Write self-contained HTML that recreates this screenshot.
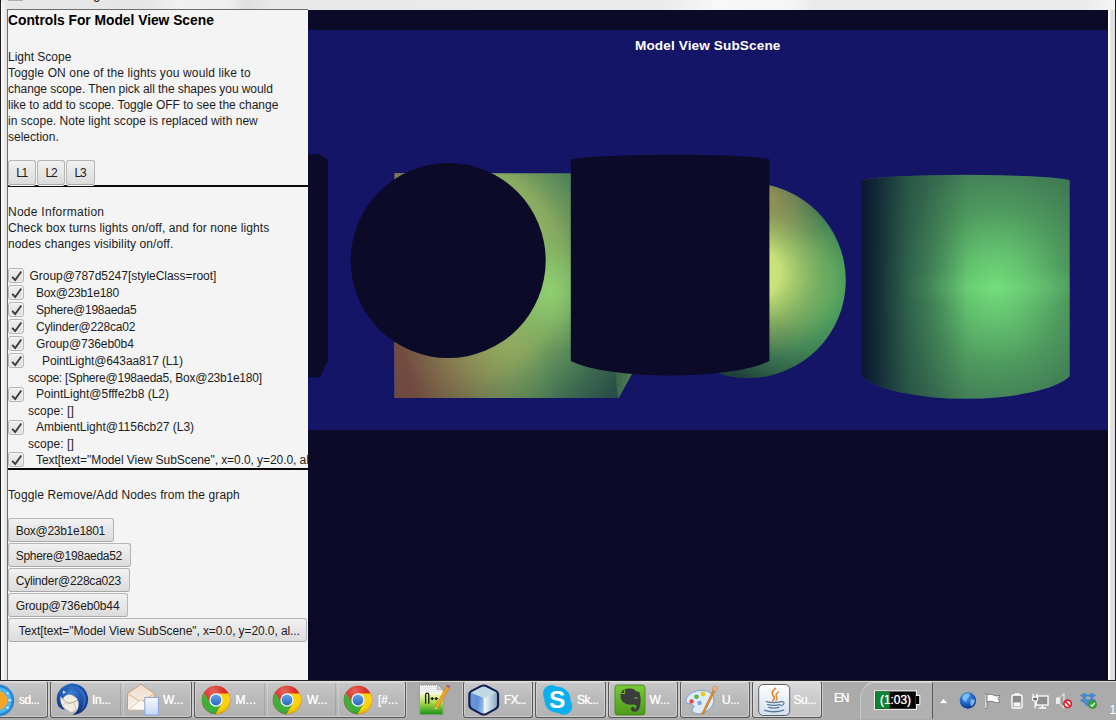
<!DOCTYPE html>
<html lang="en"><head><meta charset="utf-8"><title>Model View SubScene</title>
<style>
html,body{margin:0;padding:0;}
body{width:1116px;height:720px;overflow:hidden;position:relative;background:#ececec;font-family:"Liberation Sans",sans-serif;}
div,span{position:absolute;box-sizing:border-box;}
.t{white-space:nowrap;line-height:20px;height:20px;}
.clipL{width:272px;overflow:hidden;}
#frameL{left:0;top:0;width:1px;height:680px;background:#1c1c1c;}
#frameR{left:1115px;top:0;width:1px;height:680px;background:#1c1c1c;}
#frame{left:1px;top:0;width:1114px;height:680px;background:linear-gradient(100deg,#e7e7e7 0,#e6e6e6 12%,#f1f1f1 14.5%,#efefef 18.5%,#dfdfdf 20%,#e9e9e9 22%,#ebebeb 54%,#f8f8f8 58%,#f6f6f6 64%,#eaeaea 66%,#ebebeb 88%,#f7f7f7 90.5%,#f3f3f3 93%,#ececec 94.5%,#eeeeee);}
#frameRi{left:1108px;top:10px;width:7px;height:670px;background:linear-gradient(90deg,#fdfdfd 0 1.5px,#e2e2e2 2px,#dedede);}
#frameLi{left:1px;top:2px;width:6px;height:678px;background:linear-gradient(90deg,#fbfbfb,#f0f0f0 40%,#e3e3e3);}
#tl{left:8px;top:0;width:15px;height:1px;background:#adadad;}
#client{left:7px;top:9px;width:301px;height:672px;border-left:1px solid #6e6e6e;border-top:1px solid #6e6e6e;}
#panel{left:8px;top:10px;width:300px;height:670px;background:#f4f4f4;}
#scene{left:308px;top:10px;width:800px;height:670px;background:#0b0a28;overflow:hidden;}
#sub{left:0;top:20px;width:800px;height:400px;background:#151567;overflow:hidden;}
.hr{left:8px;width:300px;height:2px;background:#0a0a0a;}
.btn{height:24px;border:1px solid #b5b5b5;border-bottom-color:#a8a8a8;border-radius:3px;background:linear-gradient(#f1f1f1,#dcdcdc);box-shadow:0 1px 0 #fafafa;}
.cb{left:8px;width:16px;height:15px;border:1px solid #b4b4b4;border-radius:3px;background:linear-gradient(#efefef,#dedede);box-shadow:inset 0 0 0 1px rgba(255,255,255,.5);}
.cb svg{position:absolute;left:1.5px;top:0.5px;}
#taskbar{left:0;top:680px;width:1116px;height:40px;background:#ababab;border-top:1px solid #222;box-shadow:inset 0 1px 0 #dcdcdc;}
.tb{top:0px;height:37px;border:1px solid #585858;border-top-color:#dedede;border-radius:3px;background:linear-gradient(#c8c8c8,#b9b9b9 50%,#b3b3b3);box-shadow:inset 0 0 0 1px rgba(255,255,255,.3),1px 0 0 rgba(225,225,225,.6),-1px 0 0 rgba(225,225,225,.6);}
.tb.act{background:linear-gradient(#d9d9d9,#cbcbcb 50%,#c4c4c4);}
.sep{position:absolute;top:1px;width:2px;height:33px;border-left:1px solid rgba(120,120,120,.3);border-right:1px solid rgba(230,230,230,.4);}
#battab{left:860px;top:1px;width:73px;height:37px;background:#b1b1b1;border-top:1px solid #d4d4d4;border-left:1px solid #c8c8c8;border-right:1px solid #5a5a5a;border-top-left-radius:14px 18px;}
.w{text-shadow:0 0 .7px rgba(255,255,255,.85);}

</style></head><body>
<div id="frame"></div><div id="frameL"></div><div id="frameR"></div>
<div id="client"></div><div id="frameRi"></div><div id="frameLi"></div><div id="tl"></div>
<div id="panel"></div>
<div id="scene"><div id="sub"><svg id="scenesvg" width="800" height="400" viewBox="308 30 800 400" style="position:absolute;left:0;top:0">
<defs>
<radialGradient id="gBoxA" gradientUnits="userSpaceOnUse" cx="455" cy="270" r="230">
<stop offset="0.40" stop-color="#90b264"/><stop offset="0.47" stop-color="#86a860"/><stop offset="0.54" stop-color="#6c965c"/><stop offset="0.62" stop-color="#558558"/><stop offset="0.74" stop-color="#3c6850"/><stop offset="0.86" stop-color="#2c5048"/><stop offset="1" stop-color="#223c40"/></radialGradient>
<radialGradient id="gBoxH" gradientUnits="userSpaceOnUse" cx="550" cy="290" r="52" gradientTransform="translate(550 290) scale(1 1.25) translate(-550 -290)">
<stop offset="0" stop-color="#8fd070" stop-opacity="1"/><stop offset="0.4" stop-color="#86c46c" stop-opacity=".7"/><stop offset="1" stop-color="#70a860" stop-opacity="0"/></radialGradient>
<linearGradient id="gBoxB" gradientUnits="userSpaceOnUse" x1="395" y1="330" x2="525" y2="290">
<stop offset="0" stop-color="#70463f" stop-opacity=".95"/><stop offset="0.35" stop-color="#805a44" stop-opacity=".6"/><stop offset="0.7" stop-color="#90804c" stop-opacity=".25"/><stop offset="1" stop-color="#a0a050" stop-opacity="0"/></linearGradient>
<radialGradient id="gSphA" gradientUnits="userSpaceOnUse" cx="800" cy="284" r="110">
<stop offset="0" stop-color="#5cbc68"/><stop offset="0.3" stop-color="#56ac62"/><stop offset="0.6" stop-color="#428456"/><stop offset="0.85" stop-color="#2e5c48"/><stop offset="1" stop-color="#20403c"/></radialGradient>
<radialGradient id="gSphB" gradientUnits="userSpaceOnUse" cx="756" cy="273" r="88">
<stop offset="0" stop-color="#d6e87e" stop-opacity="1"/><stop offset="0.28" stop-color="#cee27a" stop-opacity=".95"/><stop offset="0.5" stop-color="#b8c86a" stop-opacity=".66"/><stop offset="0.75" stop-color="#a8a05a" stop-opacity=".32"/><stop offset="1" stop-color="#a08850" stop-opacity="0"/></radialGradient>
<radialGradient id="gSphC" gradientUnits="userSpaceOnUse" cx="768" cy="196" r="62">
<stop offset="0" stop-color="#a89c58" stop-opacity=".85"/><stop offset="0.5" stop-color="#98985a" stop-opacity=".5"/><stop offset="1" stop-color="#80905a" stop-opacity="0"/></radialGradient>
<radialGradient id="gCyl" gradientUnits="userSpaceOnUse" cx="996" cy="287" r="150" gradientTransform="translate(996 287) scale(1 1.1) translate(-996 -287)">
<stop offset="0" stop-color="#72de7a"/><stop offset="0.22" stop-color="#62c06e"/><stop offset="0.48" stop-color="#4e985e"/><stop offset="0.75" stop-color="#407c55"/><stop offset="1" stop-color="#356a4e"/></radialGradient>
<radialGradient id="gCylH" gradientUnits="userSpaceOnUse" cx="996" cy="287" r="105" gradientTransform="translate(996 287) scale(1 .22) translate(-996 -287)">
<stop offset="0" stop-color="#74e07c" stop-opacity=".55"/><stop offset="0.5" stop-color="#6cd076" stop-opacity=".3"/><stop offset="1" stop-color="#60c070" stop-opacity="0"/></radialGradient>
<linearGradient id="gCylL" gradientUnits="userSpaceOnUse" x1="862" y1="0" x2="968" y2="0">
<stop offset="0" stop-color="#0b1830" stop-opacity="1"/><stop offset="0.12" stop-color="#0e2034" stop-opacity=".92"/><stop offset="0.45" stop-color="#183a3c" stop-opacity=".5"/><stop offset="1" stop-color="#204840" stop-opacity="0"/></linearGradient>
<clipPath id="cBox"><path d="M394.6 173.3 H631.8 V374.2 L618.8 397.9 H394.6 Z"/></clipPath>
<linearGradient id="gWedge" gradientUnits="userSpaceOnUse" x1="616" y1="0" x2="631" y2="0"><stop offset="0" stop-color="#3c664b"/><stop offset="1" stop-color="#4f7e53"/></linearGradient>
<clipPath id="cSph"><circle cx="748.3" cy="280.5" r="97.5"/></clipPath>
</defs>
<g clip-path="url(#cBox)" style="isolation:isolate">
<rect x="394" y="173" width="250" height="226" fill="url(#gBoxA)"/>
<rect x="394" y="173" width="250" height="226" fill="url(#gBoxH)"/>
<rect x="394" y="173" width="250" height="226" fill="url(#gBoxB)"/>
<path d="M615.5 372 H632 V374.2 L618.8 397.9 H617.6 Z" fill="url(#gWedge)"/>
</g>
<circle cx="448.2" cy="260.5" r="97.5" fill="#0b0a28"/>
<g clip-path="url(#cSph)" style="isolation:isolate">
<rect x="650" y="180" width="200" height="200" fill="url(#gSphA)"/>
<rect x="650" y="180" width="200" height="200" fill="url(#gSphC)"/>
<rect x="650" y="180" width="200" height="200" fill="url(#gSphB)"/>
</g>
<path d="M570.8 159.6 A 102 5.9 0 0 1 769.4 159 V361 A 108 24 0 0 1 570.8 361 Z" fill="#0b0a28"/>
<path d="M862 180.2 A 107 7.1 0 0 1 1069.7 180.2 V376.5 A 109 32 0 0 1 862 376.5 Z" fill="url(#gCyl)"/>
<path d="M862 180.2 A 107 7.1 0 0 1 1069.7 180.2 V376.5 A 109 32 0 0 1 862 376.5 Z" fill="url(#gCylH)"/>
<path d="M862 180.2 A 107 7.1 0 0 1 1069.7 180.2 V376.5 A 109 32 0 0 1 862 376.5 Z" fill="url(#gCylL)"/>
<path d="M308 154.2 H319.2 L328 159.8 V360.5 L320 377.3 H308 Z" fill="#0b0a28"/>
</svg></div></div>
<div class="hr" style="top:185px"></div>
<div class="hr" style="top:468px"></div>
<div class="btn" style="left:8px;top:160px;width:28px;height:25px"></div>
<div class="btn" style="left:37px;top:160px;width:28px;height:25px"></div>
<div class="btn" style="left:66px;top:160px;width:29px;height:25px"></div>
<div class="btn" style="left:8px;top:518px;width:106px"></div>
<div class="btn" style="left:8px;top:543px;width:123px"></div>
<div class="btn" style="left:8px;top:568px;width:122px"></div>
<div class="btn" style="left:8px;top:593px;width:120px"></div>
<div class="btn" style="left:8px;top:618px;width:299px"></div>
<div class="cb" style="top:268px"><svg width="13" height="13" viewBox="0 0 13 13"><path d="M1.2 6.8 L4.2 10.1 L10.3 1.5" fill="none" stroke="#383838" stroke-width="1.8" stroke-linejoin="miter"/></svg></div>
<div class="cb" style="top:285px"><svg width="13" height="13" viewBox="0 0 13 13"><path d="M1.2 6.8 L4.2 10.1 L10.3 1.5" fill="none" stroke="#383838" stroke-width="1.8" stroke-linejoin="miter"/></svg></div>
<div class="cb" style="top:302px"><svg width="13" height="13" viewBox="0 0 13 13"><path d="M1.2 6.8 L4.2 10.1 L10.3 1.5" fill="none" stroke="#383838" stroke-width="1.8" stroke-linejoin="miter"/></svg></div>
<div class="cb" style="top:319px"><svg width="13" height="13" viewBox="0 0 13 13"><path d="M1.2 6.8 L4.2 10.1 L10.3 1.5" fill="none" stroke="#383838" stroke-width="1.8" stroke-linejoin="miter"/></svg></div>
<div class="cb" style="top:336px"><svg width="13" height="13" viewBox="0 0 13 13"><path d="M1.2 6.8 L4.2 10.1 L10.3 1.5" fill="none" stroke="#383838" stroke-width="1.8" stroke-linejoin="miter"/></svg></div>
<div class="cb" style="top:353px"><svg width="13" height="13" viewBox="0 0 13 13"><path d="M1.2 6.8 L4.2 10.1 L10.3 1.5" fill="none" stroke="#383838" stroke-width="1.8" stroke-linejoin="miter"/></svg></div>
<div class="cb" style="top:387px"><svg width="13" height="13" viewBox="0 0 13 13"><path d="M1.2 6.8 L4.2 10.1 L10.3 1.5" fill="none" stroke="#383838" stroke-width="1.8" stroke-linejoin="miter"/></svg></div>
<div class="cb" style="top:420px"><svg width="13" height="13" viewBox="0 0 13 13"><path d="M1.2 6.8 L4.2 10.1 L10.3 1.5" fill="none" stroke="#383838" stroke-width="1.8" stroke-linejoin="miter"/></svg></div>
<div class="cb" style="top:452px"><svg width="13" height="13" viewBox="0 0 13 13"><path d="M1.2 6.8 L4.2 10.1 L10.3 1.5" fill="none" stroke="#383838" stroke-width="1.8" stroke-linejoin="miter"/></svg></div>
<div id="taskbar">
<div class="tb" style="left:-6px;width:54px"></div>
<div class="tb" style="left:50px;width:142px"><i class="sep" style="left:69px"></i></div>
<div class="tb" style="left:194px;width:212px"><i class="sep" style="left:69px"></i><i class="sep" style="left:140px"></i></div>
<div class="tb" style="left:463px;width:70px"></div>
<div class="tb" style="left:535px;width:71px"></div>
<div class="tb" style="left:608px;width:70px"></div>
<div class="tb" style="left:680px;width:70px"></div>
<div class="tb act" style="left:752px;width:70px"></div>
<div id="battab"></div>
<svg id="tbicons" width="1116" height="40" viewBox="0 680 1116 40" style="position:absolute;left:0;top:-1px">
<defs>
<linearGradient id="gSun" x1="0" y1="0" x2="0" y2="1"><stop offset="0" stop-color="#49b4f0"/><stop offset="1" stop-color="#1c78d0"/></linearGradient>
<radialGradient id="gTb" cx="0.45" cy="0.3" r="0.75"><stop offset="0" stop-color="#3c7fd4"/><stop offset="0.5" stop-color="#1c52ac"/><stop offset="1" stop-color="#0c2a6e"/></radialGradient>
<linearGradient id="gEnv" x1="0" y1="0" x2="0" y2="1"><stop offset="0" stop-color="#eedccb"/><stop offset="1" stop-color="#fbf3ea"/></linearGradient>
<linearGradient id="gDoc" x1="0" y1="0" x2="0" y2="1"><stop offset="0" stop-color="#f6f9ff"/><stop offset="1" stop-color="#c4d8f6"/></linearGradient>
<linearGradient id="gNpp" x1="0" y1="0" x2="0" y2="1"><stop offset="0" stop-color="#ffffff"/><stop offset="0.2" stop-color="#e4f29c"/><stop offset="0.5" stop-color="#a6da48"/><stop offset="1" stop-color="#189016"/></linearGradient>
<linearGradient id="gEver" x1="0" y1="0" x2="0" y2="1"><stop offset="0" stop-color="#7cc83a"/><stop offset="1" stop-color="#4c9c1c"/></linearGradient>
<linearGradient id="gJava" x1="0" y1="0" x2="0" y2="1"><stop offset="0" stop-color="#ffffff"/><stop offset="1" stop-color="#d4e0ee"/></linearGradient>
<radialGradient id="gGlobe" cx="0.4" cy="0.3" r="0.75"><stop offset="0" stop-color="#5aa4ee"/><stop offset="0.6" stop-color="#1c5cc0"/><stop offset="1" stop-color="#0c2c78"/></radialGradient>
<linearGradient id="gCubeL" x1="0" y1="0" x2="1" y2="0.3"><stop offset="0" stop-color="#6c9ade"/><stop offset="0.6" stop-color="#5f8ed4"/><stop offset="1" stop-color="#8fb4e8"/></linearGradient>
<linearGradient id="gCubeR" x1="0" y1="0" x2="1" y2="0"><stop offset="0" stop-color="#f4fafc"/><stop offset="0.45" stop-color="#c8dae8"/><stop offset="1" stop-color="#8fa8c4"/></linearGradient>
<radialGradient id="gChG" gradientUnits="userSpaceOnUse" cx="-3" cy="-9" r="26"><stop offset="0" stop-color="#ffffff" stop-opacity=".28"/><stop offset="0.45" stop-color="#ffffff" stop-opacity="0"/><stop offset="0.75" stop-color="#000000" stop-opacity="0"/><stop offset="1" stop-color="#000000" stop-opacity=".22"/></radialGradient>
<linearGradient id="gChB" x1="0" y1="0" x2="0" y2="1"><stop offset="0" stop-color="#62a4e6"/><stop offset="1" stop-color="#2a68c0"/></linearGradient>
<g id="chrome">
<circle cx="0" cy="0" r="14.3" fill="#d92a20"/>
<path d="M-11.95 -7.6 A14.3 14.3 0 0 0 -0.55 14.25 L5.7 3.3 L-5.7 3.3 Z" fill="#3fae3a"/>
<path d="M-0.55 14.25 A14.3 14.3 0 0 0 12.7 -6.6 L0 -6.6 L5.7 3.3 Z" fill="#fbd00c"/>
<circle cx="0" cy="0" r="14.3" fill="url(#gChG)"/>
<circle cx="0" cy="0" r="6.7" fill="#f2f6fb"/>
<circle cx="0" cy="0" r="5.4" fill="url(#gChB)"/>
</g>
</defs>
<!-- sun/compass icon (cut off) -->
<circle cx="-1.7" cy="700.4" r="15.9" fill="#2a86d4"/>
<circle cx="-1.7" cy="700.4" r="13.2" fill="#4fb6ee"/>
<circle cx="-1.7" cy="700.4" r="9.2" fill="#f6a526"/>
<path d="M12 700.2 L8.6 698.8 V701.6 Z M8.4 691.4 L6.2 693.6 L8.6 694.6Z M8.4 709.4 L6.2 707.2 L8.6 706.2Z" fill="#e8f6ff"/>
<!-- thunderbird -->
<path d="M60.6 696.5 L69 693.6 L79.6 700 L78.6 710.2 L71 712.2 L61 705.8 Z" fill="#f1ece1"/>
<path d="M61 697.4 L66.4 702.6 Q70 704.2 73.6 702 L79 699.8" fill="none" stroke="#a39784" stroke-width=".9"/>
<path d="M73.6 702 L76.6 710.4" fill="none" stroke="#c4baa8" stroke-width=".8"/>
<path d="M66.4 702.8 L61.4 705.8" fill="none" stroke="#cfc6b4" stroke-width=".7"/>
<path d="M71 712.2 L78.6 710.2 L76 708.4 Z" fill="#d8d0c0"/>
<path d="M58.4 706.4 A15.7 15.7 0 1 1 72.6 715 Q76.6 712.4 77.6 709.4 Q79.6 704 77.6 699.6 Q74 694.4 68.6 694.6 Q65 695.4 62.8 698.4 L60.4 696.2 Q59.8 701 61.6 704.4 Q63 707.6 65 709.8 Q61 709 58.4 706.4 Z" fill="url(#gTb)"/>
<path d="M62.8 690.4 Q66.4 686.4 70.4 688.6 Q67.4 690.4 66.4 693.4 Q64.4 695.4 62.8 698.4 L61.2 696 Q61.2 692.8 62.8 690.4 Z" fill="#2a62ba"/>
<path d="M63.2 690.4 L66 692.4 L62.8 693.8 Z" fill="#dfeaf8"/>
<path d="M74 686 Q83 688 86 697 Q87.6 706 80 712.4 Q84 706 83 699 Q81.6 690.4 74 686 Z" fill="#4a8fe2" opacity=".4"/>
<!-- envelope + doc -->
<path d="M127.5 693.5 L141 684.2 L154.5 693.5 V710 H127.5 Z" fill="url(#gEnv)" stroke="#c59e80" stroke-width="1"/>
<path d="M127.5 693.5 L141 702 L154.5 693.5" fill="none" stroke="#d2b49a" stroke-width="1"/>
<path d="M128 710 L141 699.6 L154 710 Z" fill="#fdf8f2" stroke="#d8bea6" stroke-width=".8"/>
<rect x="144.8" y="697.4" width="13.6" height="17.6" fill="url(#gDoc)" stroke="#88a6dc" stroke-width="1"/>
<!-- chromes -->
<use href="#chrome" x="216" y="700"/>
<use href="#chrome" x="287" y="700"/>
<use href="#chrome" x="358" y="700"/>
<!-- notepad++ -->
<path d="M419.6 684.6 H437.4 L443.2 689.4 V714.8 H419.6 Z" fill="#ffffff" stroke="#8a8a8a" stroke-width=".8"/>
<rect x="420.1" y="691.6" width="22.7" height="22.8" fill="url(#gNpp)"/>
<path d="M421 685.6 H437" stroke="#9a9a9a" stroke-width=".9" stroke-dasharray="1 1"/>
<path d="M421 687.8 H437 M421 689.6 H441.6 M421 691.4 H441.6" stroke="#c8ccd4" stroke-width=".6"/>
<path d="M437.4 684.6 V689.4 H443.2 Z" fill="#dcdcdc" stroke="#8e8e8e" stroke-width=".6"/>
<path d="M425.6 703.8 V695 Q425.6 693.2 427.2 693.2 Q428.8 693.2 428.8 695 V703.8" fill="none" stroke="#161616" stroke-width="1.3"/>
<path d="M430.6 698.7 H433.8 M432.2 697.1 V700.3 M434.6 698.7 H437.8 M436.2 697.1 V700.3" stroke="#161616" stroke-width="1.2"/>
<path d="M446.4 686.6 L449.2 688 L437.6 708.4 L434.8 707 Z" fill="#f3a51c" stroke="#c07a10" stroke-width=".5"/>
<path d="M447.4 684.6 L450.2 686 L449.2 688 L446.4 686.6 Z" fill="#a8586a"/>
<path d="M434.8 707 L437.6 708.4 L434.8 710.4 Z" fill="#e8c890"/>
<path d="M435.2 709.2 L434.8 710.4 L435.9 709.7Z" fill="#222"/>
<!-- netbeans cube -->
<path d="M481 686.4 Q483.7 685 486.4 686.4 L495.6 691 Q497.9 692.2 497.9 694.8 V704.8 Q497.9 707.4 495.6 708.6 L486.4 713.6 Q483.7 715 481 713.6 L471.8 708.6 Q469.5 707.4 469.5 704.8 V694.8 Q469.5 692.2 471.8 691 Z" fill="#bcd8e0" stroke="#141f56" stroke-width="2.5" stroke-linejoin="round"/>
<path d="M470.8 692.6 L483.7 698 V713.6 Q482.6 713.6 481.4 713 L472.4 708 Q470.8 707 470.8 705 Z" fill="url(#gCubeL)"/>
<path d="M496.6 692.6 L483.7 698 V713.6 Q484.8 713.6 486 713 L495 708 Q496.6 707 496.6 705 Z" fill="url(#gCubeR)"/>
<path d="M483.7 686.4 Q484.6 686.4 485.8 687 L495.4 692 Q496.4 692.4 496.4 692.6 L483.7 697.8 L471 692.6 Q471 692.4 472 692 L481.6 687 Q482.8 686.4 483.7 686.4 Z" fill="#bfdbe1"/>
<!-- skype -->
<circle cx="551.5" cy="693.6" r="8.6" fill="#0aaeee"/>
<circle cx="563.6" cy="706.2" r="8.6" fill="#0aaeee"/>
<circle cx="557.4" cy="699.8" r="13" fill="#0aaeee"/>
<text x="557.2" y="708.3" font-family="Liberation Sans, sans-serif" font-size="24.5" font-weight="700" fill="#ffffff" text-anchor="middle">S</text>
<!-- evernote -->
<rect x="615" y="685" width="30" height="30" rx="2.5" fill="url(#gEver)" stroke="#3f8416" stroke-width=".8"/>
<path d="M622.5 690.5 Q625 688.2 630 688.6 Q634 688.4 635.5 691 L639.4 692 Q641.2 697 640.4 704 Q639.6 711.6 635 711.8 Q631 712 631 708.6 Q631.2 706.4 634 706.8 L634 708.8 Q636.6 708.8 636.6 705.4 Q634 704.4 632.4 704.6 Q627 705.6 622.8 702 Q620 698.6 620.4 694.4 Q621 692 622.5 690.5 Z" fill="#3c3c3c"/>
<path d="M620.6 693.6 H624.6 V689.4" fill="none" stroke="#7cc83a" stroke-width=".9"/>
<path d="M634.4 698.2 Q636 697 637.6 698.4" fill="none" stroke="#8cd04a" stroke-width=".9"/>
<!-- paint -->
<path d="M686 703 Q685 694 697 690.8 Q710 688.6 713.6 697 Q715.6 706 706 711.6 Q697 716 692.5 711.6 Q691.4 708.4 694.4 706.6 Q692 703 686 703 Z" fill="#dcecf8" stroke="#7ea4cc" stroke-width="1"/>
<circle cx="696.5" cy="696.7" r="2.3" fill="#5cb43c"/>
<circle cx="703" cy="694" r="2.4" fill="#f2c41c"/>
<circle cx="691.6" cy="701.4" r="2.2" fill="#e2463c"/>
<circle cx="699.6" cy="703" r="2.2" fill="#84a8d4"/>
<path d="M713.2 690 L715 691 L704 713.6 L702.4 714.4 L702.2 712.8 Z" fill="#e88c24" stroke="#b4641a" stroke-width=".5"/>
<path d="M714 685.4 L718 688.2 L715.4 691.6 L712.4 690 Z" fill="#e8b878" stroke="#b07a3c" stroke-width=".5"/>
<!-- java -->
<rect x="758.7" y="684.5" width="31" height="31" rx="4.5" fill="url(#gJava)" stroke="#5c6068" stroke-width="1"/>
<path d="M775.6 688.4 Q770 692.4 773.4 696 Q775.6 698.6 772.6 700.6" fill="none" stroke="#e27a1e" stroke-width="1.5" stroke-linecap="round"/>
<path d="M778.4 692 Q774.8 694.6 776.6 697 Q777.8 699 776 700.4" fill="none" stroke="#e27a1e" stroke-width="1.2" stroke-linecap="round"/>
<path d="M766.4 701.6 Q774 703.4 781.4 701.6 M767.6 704.6 Q774 706.2 780.2 704.6 M768.8 707.4 Q774 708.8 779 707.4" fill="none" stroke="#54789c" stroke-width="1.3" stroke-linecap="round"/>
<path d="M781.4 701.6 Q785.4 701.4 783.4 704.4 Q782 706 780.2 706" fill="none" stroke="#54789c" stroke-width="1.1"/>
<path d="M764.6 710.4 Q774 713.2 783.6 710.2" fill="none" stroke="#54789c" stroke-width="1.4" stroke-linecap="round"/>
<!-- battery meter -->
<rect x="874.6" y="690.9" width="41.8" height="18.4" fill="#050505" stroke="#ffffff" stroke-width="1"/>
<rect x="916.4" y="695.4" width="3.4" height="9.2" fill="#050505" stroke="#ffffff" stroke-width="1"/>
<rect x="916" y="696" width="1.6" height="8" fill="#050505"/>
<rect x="875.2" y="691.5" width="14.6" height="17.2" fill="#0c8432"/>
<!-- tray arrow -->
<path d="M939.2 703.6 L943.6 698.4 L948 703.6 Z" fill="#ffffff" stroke="#8c8c8c" stroke-width=".5"/>
<!-- globe -->
<circle cx="967.9" cy="700.5" r="8.2" fill="url(#gGlobe)"/>
<path d="M963 695 Q966 693 969.4 693.6 Q970.4 696 968 697.6 Q966 699.6 966.6 702 Q964 701.4 962.4 698.4 Z M970.6 699.6 Q973.6 698.6 975 700.6 Q974 705 971 706.6 Q970 703 970.6 699.6 Z" fill="#8cc4f4" opacity=".85"/>
<!-- flag -->
<path d="M985.6 694.2 V708.4" stroke="#ffffff" stroke-width="1.8"/>
<path d="M985 693.8 H987 V708.6 H985 Z" fill="none" stroke="#5a5a5a" stroke-width=".5"/>
<path d="M987 694.8 Q991 693.4 994 695.2 Q997 696.8 1000 695.4 L998 698.8 L1000 702 Q997 703.4 994 702 Q991 700.4 987 701.8 Z" fill="#ffffff" stroke="#5c5c5c" stroke-width=".7"/>
<!-- battery tray -->
<rect x="1012" y="695" width="10" height="13" rx="1.6" fill="#8c8c8c" stroke="#ffffff" stroke-width="1.4"/>
<rect x="1014.6" y="693.2" width="4.8" height="2" fill="#ffffff"/>
<rect x="1013.6" y="702.4" width="6.8" height="4.2" fill="#f4f4f4"/>
<!-- network -->
<rect x="1036.4" y="696" width="11.6" height="9" fill="#8e8e8e" stroke="#ffffff" stroke-width="1.3"/>
<path d="M1039 708 H1046 M1042.4 705.4 V708" stroke="#ffffff" stroke-width="1.4"/>
<path d="M1033.2 693.4 V697 M1037 693.4 V697 M1032.6 697.2 H1037.6 V700 Q1035.2 702 1032.6 700 Z M1035.1 701 V708.4" fill="#6a6a6a" stroke="#ffffff" stroke-width="1.2"/>
<!-- speaker -->
<path d="M1056.6 698 H1059.6 L1064 693.6 V708 L1059.6 703.6 H1056.6 Z" fill="#e8e8e8" stroke="#ffffff" stroke-width=".8"/>
<path d="M1060.4 697.6 L1063.4 694.8 V706.8 L1060.4 704 Z" fill="#9c9c9c"/>
<circle cx="1067.6" cy="703.8" r="3.7" fill="#f4f4f4" stroke="#e01c24" stroke-width="1.7"/>
<path d="M1065.2 701.4 L1070 706.2" stroke="#e01c24" stroke-width="1.6"/>
<!-- dropbox -->
<path d="M1084.2 693.2 L1088 695.6 L1084.2 698 L1080.4 695.6 Z M1091.8 693.2 L1095.6 695.6 L1091.8 698 L1088 695.6 Z M1084.2 698 L1088 700.4 L1084.2 702.8 L1080.4 700.4 Z M1091.8 698 L1095.6 700.4 L1091.8 702.8 L1088 700.4 Z M1088 701.6 L1091.6 703.8 L1088 706.2 L1084.4 703.8 Z" fill="#3f8fdc" stroke="#2468b4" stroke-width=".4"/>
<circle cx="1092.6" cy="704.6" r="4" fill="#38a832" stroke="#1f7a1c" stroke-width=".5"/>
<path d="M1090.6 704.6 L1092.2 706.2 L1094.8 702.8" fill="none" stroke="#ffffff" stroke-width="1.2"/>
</svg>
</div>


<div id="labels">
<span class="t" style="left:8px;top:10.600000000000001px;font-size:13.8px;color:#000;font-weight:700;letter-spacing:-0.006px;">Controls For Model View Scene</span>
<span class="t" style="left:8px;top:47px;font-size:12px;color:#1c1c1c;letter-spacing:-0.008px;">Light Scope</span>
<span class="t" style="left:8px;top:63px;font-size:12px;color:#1c1c1c;letter-spacing:0.133px;">Toggle ON one of the lights you would like to</span>
<span class="t" style="left:8px;top:79px;font-size:12px;color:#1c1c1c;letter-spacing:-0.066px;">change scope. Then pick all the shapes you would</span>
<span class="t" style="left:8px;top:95px;font-size:12px;color:#1c1c1c;letter-spacing:-0.020px;">like to add to scope. Toggle OFF to see the change</span>
<span class="t" style="left:8px;top:111px;font-size:12px;color:#1c1c1c;letter-spacing:0.021px;">in scope. Note light scope is replaced with new</span>
<span class="t" style="left:8px;top:127px;font-size:12px;color:#1c1c1c;letter-spacing:0.010px;">selection.</span>
<span class="t" style="left:8px;top:202px;font-size:12px;color:#1c1c1c;letter-spacing:0.265px;">Node Information</span>
<span class="t" style="left:8px;top:218px;font-size:12px;color:#1c1c1c;letter-spacing:0.094px;">Check box turns lights on/off, and for none lights</span>
<span class="t" style="left:8px;top:234px;font-size:12px;color:#1c1c1c;letter-spacing:0.086px;">nodes changes visibility on/off.</span>
<span class="t" style="left:29.5px;top:266px;font-size:12px;color:#1c1c1c;letter-spacing:-0.038px;">Group@787d5247[styleClass=root]</span>
<span class="t" style="left:36px;top:283px;font-size:12px;color:#1c1c1c;letter-spacing:-0.288px;">Box@23b1e180</span>
<span class="t" style="left:36px;top:300px;font-size:12px;color:#1c1c1c;letter-spacing:-0.265px;">Sphere@198aeda5</span>
<span class="t" style="left:36px;top:317px;font-size:12px;color:#1c1c1c;letter-spacing:-0.184px;">Cylinder@228ca02</span>
<span class="t" style="left:36px;top:334px;font-size:12px;color:#1c1c1c;letter-spacing:-0.081px;">Group@736eb0b4</span>
<span class="t" style="left:42px;top:351px;font-size:12px;color:#1c1c1c;letter-spacing:-0.118px;">PointLight@643aa817 (L1)</span>
<span class="t" style="left:28px;top:368px;font-size:12px;color:#1c1c1c;letter-spacing:-0.230px;">scope: [Sphere@198aeda5, Box@23b1e180]</span>
<span class="t" style="left:36px;top:384px;font-size:12px;color:#1c1c1c;letter-spacing:-0.007px;">PointLight@5fffe2b8 (L2)</span>
<span class="t" style="left:28px;top:401px;font-size:12px;color:#1c1c1c;letter-spacing:0.049px;">scope: []</span>
<span class="t" style="left:36px;top:417px;font-size:12px;color:#1c1c1c;letter-spacing:-0.028px;">AmbientLight@1156cb27 (L3)</span>
<span class="t" style="left:28px;top:434px;font-size:12px;color:#1c1c1c;letter-spacing:0.049px;">scope: []</span>
<span class="t clipL" style="left:36px;top:450px;font-size:12px;color:#1c1c1c;letter-spacing:-0.067px;">Text[text=&quot;Model View SubScene&quot;, x=0.0, y=20.0, alignment=CENTER]</span>
<span class="t" style="left:8px;top:485px;font-size:12px;color:#1c1c1c;letter-spacing:0.114px;">Toggle Remove/Add Nodes from the graph</span>
<span class="t" style="left:15.7px;top:520.5px;font-size:12px;color:#1c1c1c;letter-spacing:-0.280px;">Box@23b1e1801</span>
<span class="t" style="left:15.7px;top:545.5px;font-size:12px;color:#1c1c1c;letter-spacing:-0.291px;">Sphere@198aeda52</span>
<span class="t" style="left:15.7px;top:570.5px;font-size:12px;color:#1c1c1c;letter-spacing:-0.213px;">Cylinder@228ca023</span>
<span class="t" style="left:15.7px;top:595.5px;font-size:12px;color:#1c1c1c;letter-spacing:-0.121px;">Group@736eb0b44</span>
<span class="t" style="left:18.5px;top:620.5px;font-size:12px;color:#1c1c1c;letter-spacing:-0.091px;">Text[text=&quot;Model View SubScene&quot;, x=0.0, y=20.0, al...</span>
<span class="t" style="left:16.3px;top:162.5px;font-size:12px;color:#1c1c1c;letter-spacing:-1.380px;">L1</span>
<span class="t" style="left:45.6px;top:162.5px;font-size:12px;color:#1c1c1c;letter-spacing:-1.280px;">L2</span>
<span class="t" style="left:74.5px;top:162.5px;font-size:12px;color:#1c1c1c;letter-spacing:-1.180px;">L3</span>
<span class="t" style="left:93.3px;top:-14.6px;font-size:12.5px;color:#000;letter-spacing:-0.350px;">g</span>
<span class="t" style="left:635px;top:35.8px;font-size:13.6px;color:#ffffff;font-weight:700;letter-spacing:0.117px;">Model View SubScene</span>
<span class="t w" style="left:19px;top:690px;font-size:12px;color:#ffffff;letter-spacing:-0.438px;">sd...</span>
<span class="t w" style="left:92px;top:690px;font-size:12px;color:#ffffff;letter-spacing:-0.303px;">In...</span>
<span class="t w" style="left:163px;top:690px;font-size:12px;color:#ffffff;letter-spacing:-0.093px;">W...</span>
<span class="t w" style="left:235.6px;top:690px;font-size:12px;color:#ffffff;letter-spacing:0.125px;">M...</span>
<span class="t w" style="left:307px;top:690px;font-size:12px;color:#ffffff;letter-spacing:-0.093px;">W...</span>
<span class="t w" style="left:378px;top:690px;font-size:12px;color:#ffffff;letter-spacing:-0.003px;">[#...</span>
<span class="t w" style="left:504px;top:690px;font-size:12px;color:#ffffff;letter-spacing:-0.669px;">FX...</span>
<span class="t w" style="left:577px;top:690px;font-size:12px;color:#ffffff;letter-spacing:-0.603px;">Sk...</span>
<span class="t w" style="left:649.5px;top:690px;font-size:12px;color:#ffffff;letter-spacing:-0.093px;">W...</span>
<span class="t w" style="left:722px;top:690px;font-size:12px;color:#ffffff;letter-spacing:-0.343px;">U...</span>
<span class="t w" style="left:793.6px;top:690px;font-size:12px;color:#ffffff;letter-spacing:-0.477px;">Su...</span>
<span class="t w" style="left:834px;top:688px;font-size:12px;color:#ffffff;letter-spacing:-1.236px;">EN</span>
<span class="t w" style="left:880px;top:690px;font-size:12px;color:#ffffff;letter-spacing:-0.060px;">(1:03)</span>
<span class="t" style="left:1109.4px;top:699.6px;font-size:12px;color:#ffffff;letter-spacing:-0.688px;">1</span>
</div>
</body></html>
